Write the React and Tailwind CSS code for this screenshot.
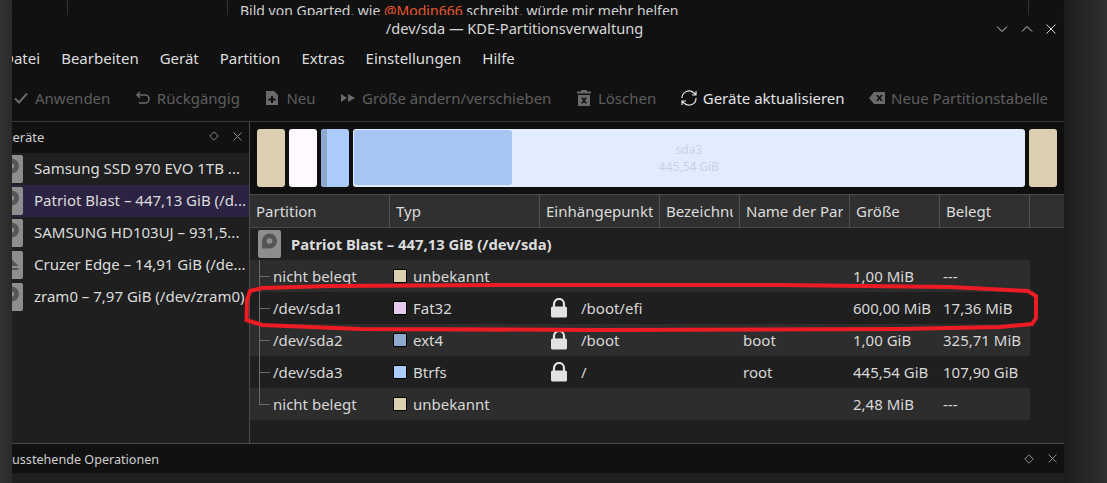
import React from 'react';

const menus = ['Datei', 'Bearbeiten', 'Gerät', 'Partition', 'Extras', 'Einstellungen', 'Hilfe'];
const devices = [
    { name: 'Samsung SSD 970 EVO 1TB ...' },
    { name: 'Patriot Blast – 447,13 GiB (/d...', active: true },
    { name: 'SAMSUNG HD103UJ – 931,5...' },
    { name: 'Cruzer Edge – 14,91 GiB (/de...', usb: true },
    { name: 'zram0 – 7,97 GiB (/dev/zram0)' },
];
const columns = ['Partition', 'Typ', 'Einhängepunkt', 'Bezeichnung', 'Name der Partition', 'Größe', 'Belegt'];
const partitions = [
    { name: 'nicht belegt', color: 'bg-[#dccfb0]', type: 'unbekannt', size: '1,00 MiB', used: '---', stripe: true },
    { name: '/dev/sda1', color: 'bg-[#e6c9ee]', type: 'Fat32', mount: '/boot/efi', size: '600,00 MiB', used: '17,36 MiB' },
    { name: '/dev/sda2', color: 'bg-[#8fa8cf]', type: 'ext4', mount: '/boot', label: 'boot', size: '1,00 GiB', used: '325,71 MiB', stripe: true },
    { name: '/dev/sda3', color: 'bg-[#abcbfb]', type: 'Btrfs', mount: '/', label: 'root', size: '445,54 GiB', used: '107,90 GiB' },
    { name: 'nicht belegt', color: 'bg-[#dccfb0]', type: 'unbekannt', size: '2,48 MiB', used: '---', stripe: true, last: true },
];

const DiskIcon = () => (
    <svg width="23" height="28" viewBox="0 0 23 28" className="shrink-0">
        <rect width="23" height="28" rx="2" fill="#8e8e8e" />
        <path d="M4 11a7.500 7.500 0 1 1 7.500 7.500H4z" fill="#555" />
        <circle cx="11.500" cy="11" r="2.800" fill="#8e8e8e" />
    </svg>
);

const UsbIcon = () => (
    <svg width="23" height="28" viewBox="0 0 23 28" className="shrink-0">
        <rect width="23" height="28" rx="2" fill="#8e8e8e" />
        <path d="M11.500 8l7 7h-14zM4.500 17h14v2h-14z" fill="#555" />
    </svg>
);

const LockIcon = () => (
    <svg width="18" height="20" viewBox="0 0 18 20" className="shrink-0">
        <path d="M4 9V6a5 5 0 0 1 10 0v3" fill="none" stroke="#e2e2e2" strokeWidth="2.200" />
        <rect x="1" y="8.500" width="16" height="11" rx="1.500" fill="#e2e2e2" />
    </svg>
);

const DockButtons = ({ className }) => (
    <div className={`flex items-center gap-[14px] ${className || ''}`}>
        <svg width="10" height="10" viewBox="0 0 10 10" fill="none" stroke="#8a8a8a">
            <path d="M5 .8L9.200 5 5 9.200.8 5z" />
        </svg>
        <svg width="9" height="9" viewBox="0 0 9 9" fill="none" stroke="#8a8a8a">
            <path d="M.5.500l8 8M8.500.500l-8 8" />
        </svg>
    </div>
);

const ToolButton = ({ icon, label, enabled }) => (
    <div className={`flex items-center gap-[6px] ${enabled ? 'text-[#e4e4e4]' : 'text-[#5e5e5e]'}`}>
        <svg width="16" height="16" viewBox="0 0 16 16" className="shrink-0">{icon}</svg>
        <span>{label}</span>
    </div>
);

const tools = [
    { label: 'Anwenden', icon: <path d="M2 8.500l4 4 8-9" fill="none" stroke="#6a6a6a" strokeWidth="2" /> },
    { label: 'Rückgängig', icon: <path d="M5 2L2 5l3 3M2 5h8a3.500 3.500 0 0 1 0 8H4" fill="none" stroke="#6a6a6a" strokeWidth="1.600" /> },
    { label: 'Neu', icon: <path fillRule="evenodd" d="M2 1h8l4 4v10H2zM7 6v2.500H4.500v2H7V13h2v-2.500h2.500v-2H9V6z" fill="#6a6a6a" /> },
    { label: 'Größe ändern/verschieben', icon: <path d="M1 4l6 4-6 4zM8 4l7 4-7 4z" fill="#6a6a6a" /> },
    { label: 'Löschen', icon: <path fillRule="evenodd" d="M5 0h6v1.500h4v2H1v-2h4zM2 5h12v11H2zM5 7.500L7 10.500 5 13.500h2l1-1.500 1 1.500h2L9 10.500l2-3H9L8 9 7 7.500z" fill="#6a6a6a" /> },
    {
        label: 'Geräte aktualisieren',
        enabled: true,
        icon: (
            <g fill="none" stroke="#e4e4e4" strokeWidth="1.200">
                <path d="M1 8a7 7 0 0 1 12-5l2 2M15 1v4h-4" />
                <path d="M15 8a7 7 0 0 1-12 5l-2-2M1 15v-4h4" />
            </g>
        ),
    },
    { label: 'Neue Partitionstabelle', icon: <path fillRule="evenodd" d="M5 2h11v12H5L0 8zM7 5l2.500 3L7 11h2l1.500-1.800L12 11h2l-2.500-3L14 5h-2l-1.500 1.800L9 5z" fill="#6a6a6a" /> },
];

const gridCols = 'grid grid-cols-[140px_150px_120px_80px_110px_90px_90px]';

export default function App() {
    return (
        <div className="relative w-[1107px] h-[483px] overflow-hidden flex bg-[#1f1f1f] font-['Noto_Sans',sans-serif] text-[15px] text-[#dcdcdc]">
            <div className="w-3 shrink-0 bg-gradient-to-r from-[#333333] to-[#2a2a2a]" />

            <div className="w-[1052px] shrink-0 flex flex-col">
                {/* forum page behind the window */}
                <div className="h-[15px] shrink-0 bg-[#111111] overflow-hidden flex">
                    <div className="w-[56px] border-r border-[#333333]" />
                    <div className="w-[160px] border-r border-[#333333]" />
                    <div className="flex-1 pl-[12px] mt-[1px] whitespace-nowrap leading-[20px] text-[14px] text-[#d0d0d0]">
                        Bild von Gparted, wie <span className="text-[#e4572e]">@Modin666</span> schreibt, würde mir mehr helfen
                    </div>
                    <div className="w-[36px] border-l border-[#333333]" />
                </div>

                <div className="flex-1 flex flex-col min-h-0 bg-[#111111] rounded-t-[3px] overflow-hidden">
                    {/* title bar */}
                    <div className="relative h-[29px] shrink-0 flex items-center justify-center pb-[1px] text-[#d8d8d8]">
                        <span className="-ml-[47px] text-[14.6px]">/dev/sda — KDE-Partitionsverwaltung</span>
                        <div className="absolute right-[8px] top-[9px] flex items-center gap-[13px]">
                            <svg width="12" height="10" viewBox="0 0 12 10" fill="none" stroke="#cfcfcf"><path d="M1 2.500l5 5 5-5" /></svg>
                            <svg width="12" height="10" viewBox="0 0 12 10" fill="none" stroke="#cfcfcf"><path d="M1 7.500l5-5 5 5" /></svg>
                            <svg width="10" height="10" viewBox="0 0 10 10" fill="none" stroke="#cfcfcf"><path d="M.5.500l9 9M9.500.500l-9 9" /></svg>
                        </div>
                    </div>

                    {/* menu bar */}
                    <div className="h-[31px] shrink-0 flex items-center gap-[21px] -ml-[9px] pb-[3px] text-[#dedede]">
                        {menus.map((m) => <span key={m}>{m}</span>)}
                    </div>

                    {/* toolbar */}
                    <div className="h-[46px] shrink-0 flex items-center gap-[24.5px] pl-[1px] whitespace-nowrap">
                        {tools.map((t) => <ToolButton key={t.label} {...t} />)}
                    </div>

                    <div className="flex-1 min-h-0 flex border-t border-[#3a3a3a] bg-[#1f1f1f]">
                        {/* devices panel */}
                        <div className="w-[238px] shrink-0 border-r border-[#4a4a4a] flex flex-col overflow-hidden">
                            <div className="h-[31px] shrink-0 bg-[#111111] flex items-center justify-between pr-[7px] pt-[1px] text-[13px]">
                                <span className="-ml-[9px] text-[#cfcfcf]">Geräte</span>
                                <DockButtons className="-mt-[4px]" />
                            </div>
                            {devices.map((d) => (
                                <div key={d.name} className={`h-[32px] shrink-0 flex items-center gap-[11px] -ml-[12px] whitespace-nowrap ${d.active ? 'bg-[#2c2342]' : ''}`}>
                                    {d.usb ? <UsbIcon /> : <DiskIcon />}
                                    <span className="pb-[2px]">{d.name}</span>
                                </div>
                            ))}
                        </div>

                        {/* partition panel */}
                        <div className="flex-1 min-w-0 flex flex-col">
                            <div className="h-[72px] shrink-0 bg-[#0f0f0f] flex gap-[4px] pl-[7px] pr-[7px] pt-[7px] pb-[7px]">
                                <div className="w-[28px] rounded-[3px] bg-[#dccfb0]" />
                                <div className="w-[28px] rounded-[3px] bg-[#fdf9ff]" />
                                <div className="w-[28px] rounded-[3px] bg-[#abcbfb] overflow-hidden">
                                    <div className="w-[6px] h-full bg-[#8fa8cf]" />
                                </div>
                                <div className="relative flex-1 rounded-[3px] bg-[#e1edfe] p-[1px] pb-[2px]">
                                    <div className="w-[158px] h-full rounded-[3px] bg-[#a6c5f3]" />
                                    <div className="absolute inset-0 flex flex-col items-center justify-center text-[12px] leading-[17px] text-[#c9d3e0]">
                                        <span>sda3</span>
                                        <span>445,54 GiB</span>
                                    </div>
                                </div>
                                <div className="w-[28px] rounded-[3px] bg-[#dccfb0]" />
                            </div>

                            <div className="h-[34px] shrink-0 flex bg-[#303030] border-y border-[#4a4a4a] text-[#dcdcdc]">
                                <div className={gridCols}>
                                    {columns.map((c) => (
                                        <div key={c} className="border-r border-[#505050] pl-[6px] pr-[6px] leading-[32px]">
                                            <div className="overflow-hidden whitespace-nowrap">{c}</div>
                                        </div>
                                    ))}
                                </div>
                            </div>

                            <div className="relative flex-1 min-h-0 w-[780px] overflow-hidden">
                                <div className="h-[32px] flex items-center gap-[10px] pl-[8px] font-bold text-[14.8px]">
                                    <DiskIcon />
                                    <span>Patriot Blast – 447,13 GiB (/dev/sda)</span>
                                </div>
                                {partitions.map((p, i) => (
                                    <div key={i} className={`relative ${gridCols} h-[32px] items-center whitespace-nowrap text-[#d8d8d8] ${p.stripe ? 'bg-[#2d2d2d]' : 'bg-[#1f1f1f]'}`}>
                                        <div className="absolute left-[9px] top-0 w-[11px] h-[17px] border-l border-b border-[#6a6a6a]" />
                                        {!p.last && <div className="absolute left-[9px] top-[16px] h-[16px] border-l border-[#6a6a6a]" />}
                                        <div className="pl-[23px]">{p.name}</div>
                                        <div className="flex items-center gap-[6px] pl-[3px]">
                                            <div className={`w-[14px] h-[14px] border border-black ${p.color}`} />
                                            <span>{p.type}</span>
                                        </div>
                                        <div className="flex items-center gap-[13px] pl-[10px]">
                                            {p.mount && <LockIcon />}
                                            <span>{p.mount}</span>
                                        </div>
                                        <div />
                                        <div className="pl-[3px]">{p.label}</div>
                                        <div className="pl-[3px]">{p.size}</div>
                                        <div className="pl-[3px]">{p.used}</div>
                                    </div>
                                ))}
                            </div>
                        </div>
                    </div>

                    {/* pending operations dock */}
                    <div className="h-[30px] shrink-0 bg-[#111111] border-t border-[#4a4a4a] flex items-center justify-between pr-[7px] text-[12.6px] text-[#cfcfcf]">
                        <span className="-ml-[8px] pt-[3px]">Ausstehende Operationen</span>
                        <DockButtons />
                    </div>
                    <div className="h-[10px] shrink-0 bg-[#1f1f1f]" />
                </div>
            </div>

            <div className="flex-1 bg-gradient-to-r from-[#1c1c1c] via-[#262626] to-[#303030]" />

            {/* red hand drawn marker on top of the screenshot */}
            <svg width="1107" height="483" className="absolute inset-0 pointer-events-none">
                <path
                    d="M330 286L262 288L250 291L247 300L246.500 320L262 325L360 329L600 330L900 329L1000 327L1032 324L1036 318L1036 296L1028 291L950 287L780 285L500 285Z"
                    fill="none"
                    stroke="#ed1c24"
                    strokeWidth="4"
                />
            </svg>
        </div>
    );
}
